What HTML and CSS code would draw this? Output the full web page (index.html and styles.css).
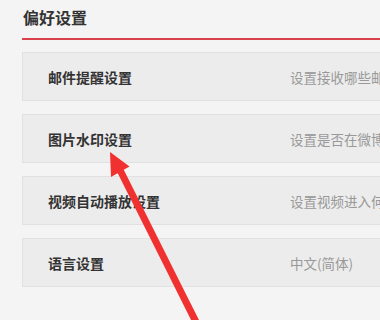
FILE: index.html
```html
<!DOCTYPE html>
<html lang="zh">
<head>
<meta charset="utf-8">
<link rel="stylesheet" href="styles.css">
</head>
<body>
<div class="page">
  <h1 class="title">偏好设置</h1>
  <div class="rule"></div>
  <ul class="list">
    <li class="row"><span class="label">邮件提醒设置</span><span class="desc">设置接收哪些邮件提醒</span></li>
    <li class="row"><span class="label">图片水印设置</span><span class="desc">设置是否在微博图片上添加水印</span></li>
    <li class="row"><span class="label">视频自动播放设置</span><span class="desc">设置视频进入何种情况下自动播放</span></li>
    <li class="row"><span class="label">语言设置</span><span class="desc">中文(简体)</span></li>
  </ul>
</div>
<svg class="arrow" width="380" height="320" viewBox="0 0 380 320">
  <line x1="118" y1="166" x2="196" y2="322" stroke="#f0312f" stroke-width="7"/>
  <polygon points="110,152 129.5,166.5 111,177" fill="#f0312f"/>
</svg>
</body>
</html>
```
FILE: styles.css
```css
html, body {
  margin: 0;
  padding: 0;
  width: 380px;
  height: 320px;
  overflow: hidden;
  background: #f4f4f4;
  font-family: "Noto Sans CJK SC", "Noto Sans", sans-serif;
}
.page {
  width: 440px;
  padding-left: 22px;
  padding-top: 6px;
}
.title {
  margin: 0 0 0 1px;
  font-size: 16px;
  font-weight: bold;
  color: #333;
  line-height: 22px;
}
.rule {
  margin-top: 10px;
  height: 2px;
  background: #d9414b;
}
.list {
  list-style: none;
  margin: 12px 0 0;
  padding: 0;
  display: flex;
  flex-direction: column;
  gap: 13px;
}
.row {
  display: flex;
  align-items: center;
  height: 47px;
  border: 1px solid #e1e1e1;
  background: #ececec;
  padding-left: 25px;
  white-space: nowrap;
  overflow: hidden;
}
.label {
  flex: none;
  width: 242px;
  font-size: 14px;
  font-weight: bold;
  color: #333;
}
.desc {
  flex: none;
  font-size: 13.5px;
  color: #999;
}
.arrow {
  position: absolute;
  left: 0;
  top: 0;
  pointer-events: none;
}
```
